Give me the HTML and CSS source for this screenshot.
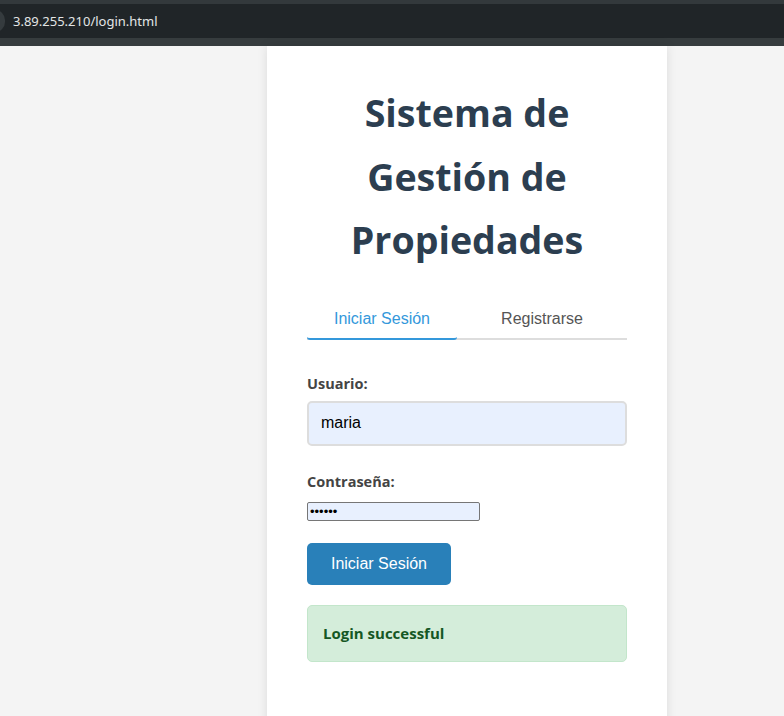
FILE: index.html
```html
<!DOCTYPE html>
<html lang="es">
<head>
<meta charset="utf-8">
<title>Login</title>
<link rel="stylesheet" href="styles.css">
</head>
<body>
<div class="browser-bar">
  <div class="url-row">
    <span class="url-dot"></span>
    <span class="url">3.89.255.210/login.html</span>
  </div>
  <div class="bar-strip"></div>
</div>
<main class="page">
  <div class="card">
    <h1 class="title">Sistema de Gestión de Propiedades</h1>
    <div class="tabs">
      <button class="tab active">Iniciar Sesión</button>
      <button class="tab">Registrarse</button>
    </div>
    <form class="form">
      <label class="label" for="user">Usuario:</label>
      <input class="text-input" id="user" type="text" value="maria">
      <label class="label" for="pass">Contraseña:</label>
      <input class="pass-input" id="pass" type="password" value="maria1">
      <button class="submit" type="button">Iniciar Sesión</button>
    </form>
    <div class="message">Login successful</div>
  </div>
</main>
</body>
</html>
```
FILE: styles.css
```css
html, body {
  margin: 0;
  padding: 0;
  height: 100%;
  overflow: hidden;
}
body {
  background: #f4f4f4;
  font-family: "Open Sans", "Noto Sans", sans-serif;
}
.browser-bar {
  background: #202528;
  border-top: 4px solid #33393c;
}
.url-row {
  height: 34px;
  display: flex;
  align-items: center;
}
.url-dot {
  width: 10px;
  height: 22px;
  margin-left: -5px;
  border-radius: 0 11px 11px 0;
  background: #353b3e;
}
.url {
  margin-left: 8px;
  color: #e3e5e6;
  font-family: "Noto Sans", "Open Sans", sans-serif;
  font-size: 13px;
}
.bar-strip {
  height: 8px;
  background: #363c3e;
}
.page {
  padding-left: 150px;
  display: flex;
  justify-content: center;
}
.card {
  width: 320px;
  padding: 35px 40px 40px;
  background: #fff;
  box-shadow: 0 0 10px rgba(0, 0, 0, 0.1);
  min-height: 700px;
}
.title {
  margin: 0;
  text-align: center;
  color: #2c3e50;
  font-size: 37.6px;
  line-height: 63.5px;
  font-weight: 700;
}
.tabs {
  display: flex;
  margin-top: 29px;
  border-bottom: 2px solid #ddd;
}
.tab {
  flex: 1;
  background: none;
  border: none;
  padding: 9px 0 10px;
  font-family: "Liberation Sans", Arial, sans-serif;
  font-size: 16px;
  color: #555;
  margin-bottom: -2px;
  border-bottom: 2px solid transparent;
  border-radius: 0 0 3px 3px;
}
.tab.active {
  flex: 0 0 150px;
  color: #3498db;
  border-bottom-color: #3498db;
}
.form {
  display: flex;
  flex-direction: column;
  align-items: flex-start;
  margin-top: 34px;
}
.label {
  font-weight: 700;
  font-size: 14.5px;
  color: #444;
  margin-bottom: 8px;
}
.text-input {
  box-sizing: border-box;
  width: 320px;
  height: 45px;
  padding: 0 12px;
  border: 2px solid #ddd;
  border-radius: 5px;
  background: #e8f0fe;
  font-family: "Liberation Sans", Arial, sans-serif;
  font-size: 16px;
  color: #000;
  margin-bottom: 26px;
}
.pass-input {
  box-sizing: border-box;
  width: 173px;
  height: 19px;
  padding: 1px 2px;
  border: 1px solid #767676;
  border-radius: 2px;
  background: #e8f0fe;
  font-size: 13px;
  margin: 3px 0 0;
}
.submit {
  margin-top: 22px;
  width: 144px;
  height: 42px;
  border: none;
  border-radius: 5px;
  background: #2980b9;
  color: #fff;
  font-family: "Liberation Sans", Arial, sans-serif;
  font-size: 16px;
}
.message {
  margin-top: 20px;
  box-sizing: border-box;
  height: 57px;
  padding: 0 15px;
  display: flex;
  align-items: center;
  background: #d4edda;
  border: 1px solid #c3e6cb;
  border-radius: 5px;
  color: #155724;
  font-weight: 700;
  font-size: 15px;
}
```
